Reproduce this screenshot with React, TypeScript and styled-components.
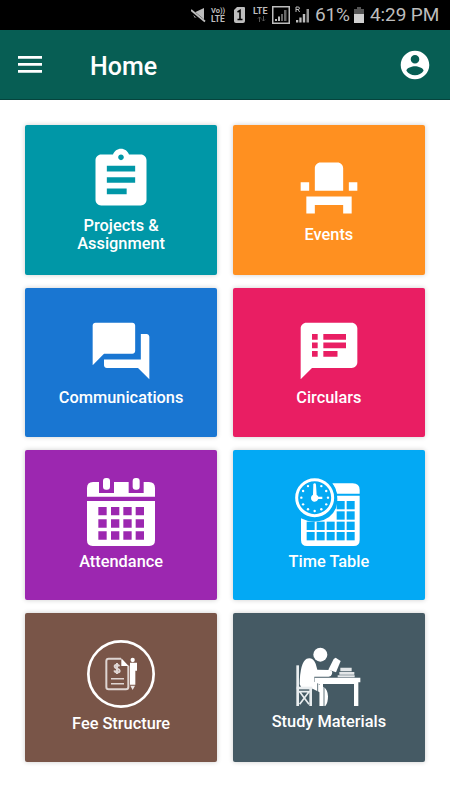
import React from "react";
import styled, { createGlobalStyle } from "styled-components";

const GlobalStyle = createGlobalStyle`
  * { box-sizing: border-box; }
  body { margin: 0; background: #fff; font-family: Roboto, "Liberation Sans", sans-serif; }
`;

const Screen = styled.div`
  width: 450px;
  height: 800px;
  background: #fff;
  overflow: hidden;
`;

const StatusBar = styled.div`
  display: flex;
  align-items: center;
  height: 30px;
  background: #000;
  color: #bdbdbd;
  padding-left: 191px;
`;

const StatusItem = styled.div<{ $w: number; $after?: number }>`
  flex: none;
  display: flex;
  flex-direction: column;
  width: ${(p) => p.$w}px;
  margin-right: ${(p) => p.$after ?? 0}px;
  white-space: nowrap;
`;

const SmallText = styled.span<{ $size?: number }>`
  font-size: ${(p) => p.$size ?? 8.5}px;
  line-height: 8px;
  font-weight: 700;
`;

const StatusText = styled.span<{ $spacing?: number }>`
  font-size: 19px;
  line-height: 30px;
  letter-spacing: ${(p) => p.$spacing ?? 0}px;
`;

const Header = styled.header`
  display: flex;
  align-items: center;
  height: 70px;
  padding: 0 20px 0 18px;
  background: #075e54;
  border-bottom: 1px solid #05443d;
`;

const IconButton = styled.button`
  display: flex;
  padding: 0;
  border: 0;
  background: none;
  color: #fff;
`;

const Title = styled.h1`
  flex: 1;
  margin: 5px 0 0 48px;
  color: #fff;
  font-size: 25px;
  line-height: 30px;
  font-weight: 500;
`;

const Grid = styled.main`
  display: grid;
  grid-template-columns: 1fr 1fr;
  grid-auto-rows: 149.5px;
  gap: 13px 15.6px;
  padding: 25px;
`;

const Tile = styled.button<{ $color: string }>`
  display: flex;
  flex-direction: column;
  align-items: center;
  padding: 0;
  border: 0;
  border-radius: 2px;
  background: ${(p) => p.$color};
  box-shadow: 0 0 5px rgba(0, 0, 0, 0.2);
  color: #fff;
  font-family: inherit;
`;

const TileIcon = styled.svg<{ $top: number }>`
  flex: none;
  width: 68px;
  height: 68px;
  margin-top: ${(p) => p.$top}px;
  fill: #fff;
`;

const Label = styled.span<{ $gap: number }>`
  margin-top: ${(p) => p.$gap}px;
  font-size: 16.35px;
  line-height: 18.5px;
  font-weight: 500;
  white-space: pre-line;
`;

const CalendarArt = () => (
  <>
    <path d="M0 56V30Q0 12 18 12H36V45H81V12H125V45H170V12H186Q204 12 204 30V56Z" />
    <rect x="48" y="0" width="21" height="35" rx="9" />
    <rect x="137" y="0" width="21" height="35" rx="9" />
    <path fillRule="evenodd" d="M0 69H204V187Q204 204 187 204H17Q0 204 0 187ZM34 87v25h25V87ZM72 87v25h25V87ZM109 87v25h25V87ZM146 87v25h25V87ZM34 124v25h25v-25ZM72 124v25h25v-25ZM109 124v25h25v-25ZM146 124v25h25v-25ZM34 160v25h25v-25ZM72 160v25h25v-25ZM109 160v25h25v-25ZM146 160v25h25v-25Z" />
  </>
);

const TimetableArt = () => {
  const cells: [number, number][] = [];
  [69, 100, 131, 162].forEach((y, row) =>
    [35, 65, 95, 125, 155].forEach((x, col) => {
      if (row > 1 || col > 2) cells.push([x, y]);
    })
  );
  return (
    <>
      <path d="M112 16H173Q194 16 194 36V47H126Q123 30 112 16Z" />
      <path d="M126 53H194V186Q194 204 176 204H36Q18 204 18 186V121Q42 134 70 130Q108 124 123 90Q129 72 126 53Z" />
      {cells.map(([x, y]) => (
        <rect key={`${x}-${y}`} x={x} y={y} width="24" height="25" fill="#03a9f4" />
      ))}
      <circle cx="59" cy="59" r="67" fill="#03a9f4" />
      <circle cx="59" cy="59" r="54" fill="none" stroke="#fff" strokeWidth="9" />
      {Array.from({ length: 12 }, (_, i) => (
        <circle
          key={i}
          cx={59 + 40 * Math.sin((i * Math.PI) / 6)}
          cy={59 - 40 * Math.cos((i * Math.PI) / 6)}
          r="3.6"
        />
      ))}
      <path d="M55 20h8l2 31q4 2 5 5h12v7H70q-3 8-11 8q-11-1-11-12q0-6 6-9Z" />
    </>
  );
};

const FeeArt = () => (
  <>
    <circle cx="102" cy="102" r="98" fill="none" stroke="#fff" strokeWidth="8" />
    <g fill="none" stroke="#ded5d2" strokeWidth="6">
      <path d="M102 56H65Q58 56 58 63V141Q58 148 65 148H117Q124 148 124 141V77" />
      <path d="M72 116H111M72 131H111" strokeWidth="4.5" />
      <path d="M97 79Q95 74 90 74Q83 74 83 79Q83 84 91 86Q98 88 98 92Q98 97 91 97Q84 97 82 91M90 69V102" />
    </g>
    <path d="M103 55L125 78H103Z" />
    <circle cx="137" cy="60" r="6.5" />
    <path d="M129 68H150V92H145V134H129Z" />
    <path d="M130 137H144L137 150Z" opacity=".85" />
  </>
);

const StudyArt = () => (
  <>
    <circle cx="76" cy="38" r="21" />
    <path d="M14 127Q15 61 35 50Q53 44 62 65L67 83L104 84Q114 86 111 96Q109 104 101 104H58V119L87 136Q98 143 99 163Q99 184 91 192H74V151L48 138H20Z" />
    <path d="M116 51L122 47L137 57L123 91L100 83Z" />
    <path d="M59 107H196V121H190V192H177V126H84V192H74V126H59Z" />
    <path d="M136 77H170V88H136ZM133 90H178V98H133ZM128 100H179V106H128Z" opacity=".85" />
    <g fill="none" stroke="#e9edef">
      <path d="M8 70V192" strokeWidth="8" />
      <path d="M5 138H52" strokeWidth="8" />
      <path d="M47 140V192" strokeWidth="8" />
      <path d="M14 149L42 187M42 149L14 187M9 149H46" strokeWidth="5" />
    </g>
    <path d="M68 124V190M87 127V192" stroke="#455a64" strokeWidth="2.500" />
  </>
);

type TileData = {
  label: string;
  color: string;
  top: number;
  gap: number;
  box?: string;
  art: React.ReactNode;
};

const tiles: TileData[] = [
  { label: "Projects &\nAssignment", color: "#0097a7", top: 20.5, gap: 3.2, art: <path d="M19 3h-4.18C14.4 1.84 13.3 1 12 1s-2.4.84-2.82 2H5c-1.1 0-2 .9-2 2v14c0 1.1.9 2 2 2h14c1.1 0 2-.9 2-2V5c0-1.1-.9-2-2-2zm-7 0c.55 0 1 .45 1 1s-.45 1-1 1-1-.45-1-1 .45-1 1-1zm2 14H7v-2h7v2zm3-4H7v-2h10v2zm0-4H7V7h10v2z" /> },
  { label: "Events", color: "#ff9020", top: 29, gap: 3.5, art: <path d="M4 18v3h3v-3h10v3h3v-6H4v3zm15-8h3v3h-3v-3zM2 10h3v3H2v-3zm15 3H7V5c0-1.1.9-2 2-2h6c1.1 0 2 .9 2 2v8z" /> },
  { label: "Communications", color: "#1976d2", top: 29.5, gap: 4, art: <path d="M21 6h-2v9H6v2c0 .55.45 1 1 1h11l4 4V7c0-.55-.45-1-1-1zm-4 6V3c0-.55-.45-1-1-1H3c-.55 0-1 .45-1 1v14l4-4h10c.55 0 1-.45 1-1z" /> },
  { label: "Circulars", color: "#e91e63", top: 29.5, gap: 4, art: <path d="M20 2H4c-1.1 0-1.99.9-1.99 2L2 22l4-4h14c1.1 0 2-.9 2-2V4c0-1.1-.9-2-2-2zM8 14H6v-2h2v2zm0-3H6V9h2v2zm0-3H6V6h2v2zm7 6h-5v-2h5v2zm3-3h-8V9h8v2zm0-3h-8V6h8v2z" /> },
  { label: "Attendance", color: "#9c27b0", top: 28, gap: 7, box: "0 0 204 204", art: <CalendarArt /> },
  { label: "Time Table", color: "#03a9f4", top: 28, gap: 7, box: "0 0 204 204", art: <TimetableArt /> },
  { label: "Fee Structure", color: "#795548", top: 27.5, gap: 7, box: "0 0 204 204", art: <FeeArt /> },
  { label: "Study Materials", color: "#455a64", top: 29, gap: 3.8, box: "0 0 204 204", art: <StudyArt /> },
];

export default function App() {
  return (
    <>
      <GlobalStyle />
      <Screen>
        <StatusBar>
          <StatusItem $w={15} $after={5}>
            <svg width="15" height="16" viewBox="0 0 15 16" fill="currentColor">
              <path d="M1 5H4.500L13 1V14L7 10.500H3.500Z" />
              <path d="M0 4L14 15.500" stroke="#000" strokeWidth="3.600" />
              <path d="M0 3L14 14.500" stroke="currentColor" strokeWidth="1.800" />
            </svg>
          </StatusItem>
          <StatusItem $w={16} $after={7}>
            <SmallText $size={7.5}>Vo))</SmallText>
            <SmallText>LTE</SmallText>
          </StatusItem>
          <StatusItem $w={11} $after={8}>
            <svg width="11" height="16" viewBox="0 0 11 16">
              <path d="M3 0H10Q11 0 11 1V14Q11 16 9 16H2Q0 16 0 14V3Z" fill="currentColor" />
              <path d="M3.500 5L6 3.500V13M3.500 12.500H8.500" fill="none" stroke="#000" strokeWidth="1.600" />
            </svg>
          </StatusItem>
          <StatusItem $w={17} $after={2}>
            <SmallText $size={9}>LTE</SmallText>
            <svg width="17" height="8" viewBox="0 0 17 8" fill="none" stroke="#555">
              <path d="M6.500 7V2M5 3.500L6.500 2L8 3.500M10.500 1V6M9 4.500L10.500 6L12 4.500" />
            </svg>
          </StatusItem>
          <StatusItem $w={18} $after={5}>
            <svg width="18" height="18" viewBox="0 0 18 18" fill="currentColor">
              <rect x=".75" y=".75" width="16.500" height="16.500" fill="none" stroke="currentColor" strokeWidth="1.500" />
              <path d="M3 13h2v2H3zM6 10.500h2V15H6z" />
              <path d="M9 8h2v7H9zM12 4h2.500v11H12z" opacity=".55" />
            </svg>
          </StatusItem>
          <StatusItem $w={15} $after={5}>
            <svg width="15" height="18" viewBox="0 0 15 18" fill="currentColor">
              <path d="M1 6V1H3Q4.500 1 4.500 2.200T3 3.500H1M3 3.500L4.600 6" fill="none" stroke="currentColor" />
              <path d="M1 14h2.300v2.500H1zM4.300 11.500h2.300v5H4.300zM7.800 8h2.400v8.500H7.800z" />
              <path d="M11.500 3H14v13.500h-2.500z" opacity=".8" />
            </svg>
          </StatusItem>
          <StatusItem $w={35} $after={4}>
            <StatusText $spacing={-0.2}>61%</StatusText>
          </StatusItem>
          <StatusItem $w={10} $after={6}>
            <svg width="10" height="17" viewBox="0 0 10 17">
              <path d="M3 0H7V2H10V7H0V2H3Z" fill="#555" />
              <path d="M0 7H10V16H0Z" fill="#d0d0d0" />
            </svg>
          </StatusItem>
          <StatusItem $w={70}>
            <StatusText $spacing={-0.1}>4:29 PM</StatusText>
          </StatusItem>
        </StatusBar>

        <Header>
          <IconButton aria-label="Menu">
            <svg width="24" height="18" viewBox="0 0 24 18" fill="#fff">
              <path d="M0 0h24v2.700H0zM0 7h24v2.700H0zM0 14h24v2.700H0z" />
            </svg>
          </IconButton>
          <Title>Home</Title>
          <IconButton aria-label="Account">
            <svg width="30" height="30" viewBox="1.500 1.500 21 21" fill="#fff">
              <path d="M12 2C6.480 2 2 6.480 2 12s4.480 10 10 10 10-4.480 10-10S17.520 2 12 2zm0 3c1.660 0 3 1.340 3 3s-1.340 3-3 3-3-1.340-3-3 1.340-3 3-3zm0 14.200c-2.500 0-4.710-1.280-6-3.220.03-1.990 4-3.080 6-3.080 1.990 0 5.970 1.090 6 3.080-1.290 1.940-3.500 3.220-6 3.220z" />
            </svg>
          </IconButton>
        </Header>

        <Grid>
          {tiles.map((t) => (
            <Tile key={t.label} $color={t.color}>
              <TileIcon $top={t.top} viewBox={t.box ?? "0 0 24 24"}>
                {t.art}
              </TileIcon>
              <Label $gap={t.gap}>{t.label}</Label>
            </Tile>
          ))}
        </Grid>
      </Screen>
    </>
  );
}
